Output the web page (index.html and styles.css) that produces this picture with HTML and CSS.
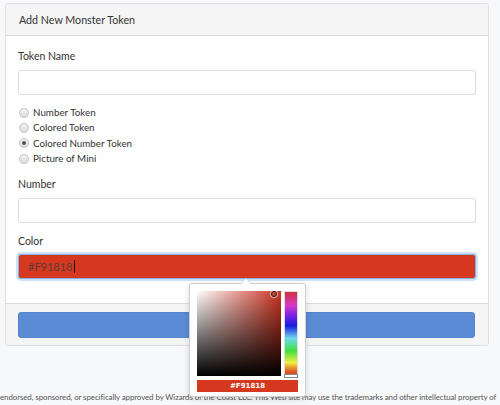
FILE: index.html
```html
<!DOCTYPE html>
<html>
<head>
<meta charset="utf-8">
<link rel="stylesheet" href="styles.css">
</head>
<body>
<div class="card">
  <div class="card-header">Add New Monster Token</div>
  <div class="card-body">
    <label class="label">Token Name</label>
    <div class="input"></div>
    <div class="radios">
      <div class="radio"><span class="dot"></span>Number Token</div>
      <div class="radio"><span class="dot"></span>Colored Token</div>
      <div class="radio"><span class="dot checked"></span>Colored Number Token</div>
      <div class="radio"><span class="dot"></span>Picture of Mini</div>
    </div>
    <label class="label label-num">Number</label>
    <div class="input"></div>
    <label class="label label-color">Color</label>
    <div class="color-group">
      <div class="input color-input">#F91818<span class="caret"></span></div>
      <div class="picker">
        <div class="picker-main">
          <div class="sat"><span class="sat-handle"></span></div>
          <div class="hue"><span class="hue-handle"></span></div>
        </div>
        <div class="preview">#F91818</div>
      </div>
    </div>
  </div>
  <div class="card-footer">
    <div class="btn"></div>
  </div>
</div>
<div class="notice">endorsed, sponsored, or specifically approved by Wizards of the Coast LLC. This Web site may use the trademarks and other intellectual property of</div>
</body>
</html>
```
FILE: styles.css
```css
html, body {
  margin: 0;
  padding: 0;
}
body {
  background: #f7f8fa;
  font-family: Lato, "Open Sans", sans-serif;
  font-size: 10px;
  color: #333;
  width: 500px;
  height: 405px;
  overflow: hidden;
  position: relative;
}
.card {
  margin: 3px 0 0 5px;
  width: 482px;
  border: 1px solid #dedfe3;
  border-radius: 3px;
  background: #fff;
}
.card-header {
  height: 31px;
  line-height: 31px;
  padding-left: 13px;
  background: #f5f5f5;
  border-bottom: 1px solid #dcdcdc;
  border-radius: 3px 3px 0 0;
  font-size: 10.7px;
  color: #333;
}
.card-body {
  padding: 13px 12px 24px 12px;
  display: flex;
  flex-direction: column;
}
.label {
  display: block;
  line-height: 15px;
  height: 15px;
  margin-bottom: 6px;
  font-size: 10.5px;
}
.input {
  height: 23px;
  border: 1px solid #dcdde1;
  border-radius: 3px;
  background: #fff;
}
.radios {
  margin-top: 10px;
  display: flex;
  flex-direction: column;
}
.radio {
  height: 15px;
  line-height: 15px;
  display: flex;
  align-items: center;
  font-size: 9.8px;
  color: #333;
}
.radio:nth-child(3) { height: 16px; }
.dot {
  width: 8px;
  height: 8px;
  border: 1px solid #c2c2c2;
  border-radius: 50%;
  background: linear-gradient(#f2f2f2, #dcdcdc);
  margin: 0 4px 0 1px;
  position: relative;
}
.dot.checked::after {
  content: "";
  position: absolute;
  left: 2px;
  top: 2px;
  width: 4px;
  height: 4px;
  border-radius: 50%;
  background: #555;
}
.label-num { margin-top: 11px; }
.label-color { margin-top: 11px; margin-bottom: 5px; }
.color-group {
  position: relative;
}
.color-input {
  height: 23px;
  background: #d6381f;
  border-color: #7fb0e8;
  box-shadow: 0 0 0 2px rgba(150, 190, 240, 0.45);
  color: #5a3a34;
  font-size: 11px;
  line-height: 23px;
  padding-left: 9px;
  display: flex;
  align-items: center;
}
.caret {
  display: inline-block;
  width: 1px;
  height: 13px;
  background: #111;
  margin-left: 1px;
}
.card-footer {
  background: #f5f5f5;
  border-top: 1px solid #dcdcdc;
  padding: 8px 13px 7px 12px;
  border-radius: 0 0 3px 3px;
}
.btn {
  height: 24px;
  background: #5b8bd4;
  border: 1px solid #5583cc;
  border-radius: 3px;
}
.notice {
  position: absolute;
  left: 0;
  top: 390px;
  width: 500px;
  white-space: nowrap;
  font-size: 7.9px;
  letter-spacing: -0.08px;
  color: #555;
  line-height: 14px;
}
.picker {
  position: absolute;
  left: 171px;
  top: 29px;
  width: 101px;
  padding: 7px 7px 4px 7px;
  background: #fff;
  border: 1px solid #cfcfcf;
  border-radius: 3px;
  box-shadow: 0 2px 6px rgba(0, 0, 0, 0.15);
  z-index: 5;
}
.picker::before {
  content: "";
  position: absolute;
  top: -6px;
  left: 50px;
  border-left: 6px solid transparent;
  border-right: 6px solid transparent;
  border-bottom: 6px solid #cfcfcf;
}
.picker::after {
  content: "";
  position: absolute;
  top: -5px;
  left: 51px;
  border-left: 5px solid transparent;
  border-right: 5px solid transparent;
  border-bottom: 5px solid #fff;
}
.picker-main {
  display: flex;
  gap: 3px;
}
.sat {
  position: relative;
  width: 84px;
  height: 85px;
  background:
    linear-gradient(to top, #000, rgba(0, 0, 0, 0)),
    linear-gradient(to right, #fff, #cc3320);
}
.sat-handle {
  position: absolute;
  right: 4px;
  top: 0;
  width: 4px;
  height: 4px;
  border: 1px solid #222;
  border-radius: 50%;
  box-shadow: 0 0 0 1px rgba(255,255,255,0.6);
}
.hue {
  position: relative;
  width: 12px;
  height: 84px;
  border: 1px solid #ddd;
  background: linear-gradient(to bottom,
    #d0303a 0%, #d838c8 16%, #6a20e8 30%, #1818e0 40%, #70d8f0 55%,
    #40e040 70%, #f0f040 84%, #e06020 94%, #d0381c 100%);
}
.hue-handle {
  position: absolute;
  left: -1px;
  bottom: -2px;
  width: 12px;
  height: 2px;
  border: 1px solid #888;
  background: #fff;
}
.preview {
  margin-top: 3px;
  height: 12px;
  line-height: 12px;
  background: #d6381f;
  color: #fff;
  font-size: 7px;
  font-weight: bold;
  text-align: center;
  font-family: "DejaVu Sans", sans-serif;
}
```
